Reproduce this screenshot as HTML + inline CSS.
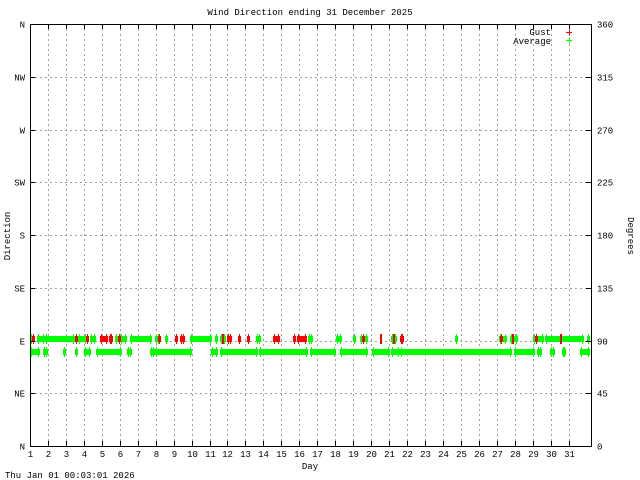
<!DOCTYPE html>
<html><head><meta charset="utf-8"><style>
html,body{margin:0;padding:0;background:#fff;width:640px;height:480px;overflow:hidden}
svg text{font-family:"Liberation Mono","DejaVu Sans Mono",monospace;font-size:9px;fill:#000}
</style></head><body>
<svg width="640" height="480" xmlns="http://www.w3.org/2000/svg">
<g stroke="#a0a0a0" stroke-width="1" stroke-dasharray="2,3" id="grid"></g>
<g id="data"></g>
<rect x="30.5" y="24.5" width="561" height="422" fill="none" stroke="#000" stroke-width="1"/>
<g id="ticks" stroke="#000"></g>
<g id="labels"></g>
<text x="310" y="15" text-anchor="middle">Wind Direction ending 31 December 2025</text>
<text x="551" y="35" text-anchor="end">Gust</text>
<text x="551" y="44" text-anchor="end">Average</text>
<path d="M566 32.5h6M569.5 29.5v6" stroke="#f00"/>
<path d="M566 40.5h6M569.5 37.5v6" stroke="#0f0"/>
<text x="10" y="236" text-anchor="middle" transform="rotate(-90 10 236)">Direction</text>
<text x="628" y="236" text-anchor="middle" transform="rotate(90 628 236)">Degrees</text>
<text x="310" y="469" text-anchor="middle">Day</text>
<text x="5" y="478">Thu Jan 01 00:03:01 2026</text>
<script>
(function(){
var ns="http://www.w3.org/2000/svg";
function el(p,t,a,txt){var e=document.createElementNS(ns,t);for(var k in a)e.setAttribute(k,a[k]);if(txt)e.textContent=txt;document.getElementById(p).appendChild(e);}
var L=30,R=591,T=24,B=446,dh=(B-T)/8,dx=17.95;
var dirs=["N","NW","W","SW","S","SE","E","NE","N"],deg=["360","315","270","225","180","135","90","45","0"];
for(var i=0;i<9;i++){var y=Math.round(T+i*dh)+0.5;
 if(i>0&&i<8)el("grid","line",{x1:L,x2:R,y1:y,y2:y});
 el("ticks","line",{x1:L,x2:L+5,y1:y,y2:y});el("ticks","line",{x1:R-5,x2:R,y1:y,y2:y});
 el("labels","text",{x:25,y:y+3,"text-anchor":"end"},dirs[i]);
 el("labels","text",{x:597,y:y+3},deg[i]);}
for(var d=1;d<=31;d++){var x=Math.round(L+(d-1)*dx)+0.5;
 if(d>1)el("grid","line",{x1:x,x2:x,y1:T,y2:B});
 el("ticks","line",{x1:x,x2:x,y1:T,y2:T+5});el("ticks","line",{x1:x,x2:x,y1:B-5,y2:B});
 el("labels","text",{x:x,y:457,"text-anchor":"middle"},""+d);}
var g="#0f0",r="#f00";
var topRow=[[30,35,g],[32,35,r],[37,45,g],[45,75,g],[75,78,r],[78,87,g],[86,89,r],[90,96,g],[100,108,r],[109,113,r],[115,118,g],[120,127,g],[118,121,r],[130,152,g],[155,160,g],[158,161,r],[165,168,g],[175,178,r],[180,185,r],[190,212,g],[215,218,g],[220,226,g],[222,224,r],[227,232,r],[238,241,r],[247,250,r],[256,261,g],[273,280,r],[293,296,r],[297,307,r],[308,313,g],[336,342,g],[353,356,g],[360,368,g],[362,365,r],[380,382,r],[391,397,g],[393,395,r],[400,404,r],[455,458,g],[499,507,g],[500,503,r],[510,518,g],[512,514,r],[533,544,g],[535,538,r],[545,584,g],[560,562,r],[587,590,g]];
var botRow=[[30,40],[43,48],[63,66],[75,78],[84,91],[96,122],[127,132],[150,155],[155,192],[211,218],[220,258],[259,308],[310,336],[340,368],[372,390],[391,400],[400,512],[514,535],[537,542],[550,555],[562,566],[580,590]];
topRow.forEach(function(s){el("data","rect",{x:s[0],y:336,width:s[1]-s[0],height:6,fill:s[2]});el("data","rect",{x:s[0]+1,y:334,width:1,height:10,fill:s[2]});el("data","rect",{x:s[1]-2,y:334,width:1,height:10,fill:s[2]});});
botRow.forEach(function(s){el("data","rect",{x:s[0],y:349,width:s[1]-s[0],height:6,fill:g});el("data","rect",{x:s[0]+1,y:347,width:1,height:10,fill:g});el("data","rect",{x:s[1]-2,y:347,width:1,height:10,fill:g});});
})();
</script>
</svg>
</body></html>
